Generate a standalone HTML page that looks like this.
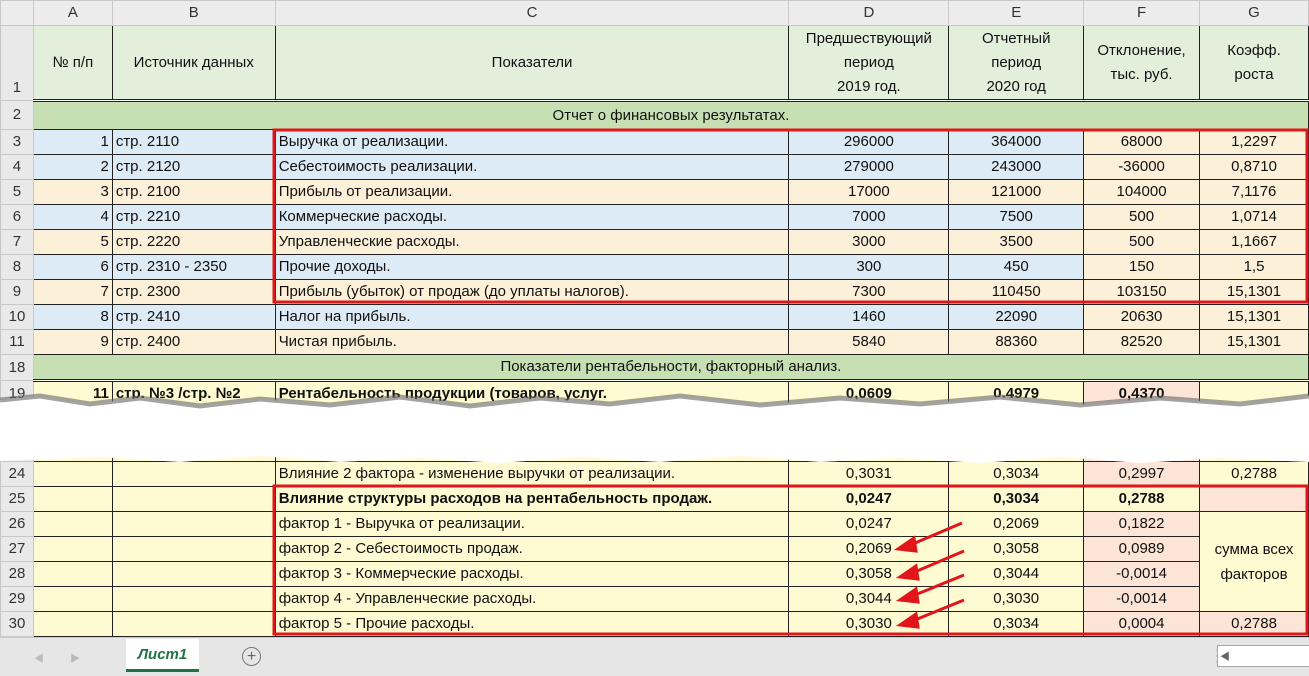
<!DOCTYPE html><html><head><meta charset="utf-8"><style>
body{margin:0;width:1309px;height:675px;overflow:hidden;background:#fff;font-family:"Liberation Sans","Noto Sans CJK SC",sans-serif;font-size:15px;color:#111;position:relative}
table{border-collapse:collapse;table-layout:fixed;position:absolute;left:0;top:0}
td{border:1px solid #222;padding:0 3px;white-space:nowrap;overflow:hidden;height:24px;line-height:24px}
td.rn{background:#e9e9e9;border:1px solid #c8c8c8;text-align:center;color:#333;padding:0}
tr.hd td{background:#ececec;border:1px solid #c8c8c8;text-align:center;height:24px;color:#333}
.c{text-align:center}.r{text-align:right}
.g1{background:#e2efda}.g2{background:#c6e0b4}.bl{background:#ddebf7}.or{background:#fdf0d8}.pk{background:#fce4d6}.yl{background:#fefad2}
.b{font-weight:bold}
</style></head><body>
<table>
<colgroup><col style="width:33px"><col style="width:79px"><col style="width:163px"><col style="width:514px"><col style="width:160px"><col style="width:135px"><col style="width:116px"><col style="width:109px"></colgroup>
<tr class="hd"><td></td><td>A</td><td>B</td><td>C</td><td>D</td><td>E</td><td>F</td><td>G</td></tr>
<tr style="height:75px"><td class="rn" style="vertical-align:bottom">1</td><td class="g1 c" style="line-height:20px">№ п/п</td><td class="g1 c">Источник данных</td><td class="g1 c">Показатели</td><td class="g1 c" style="line-height:24px;white-space:normal">Предшествующий период<br>2019 год.</td><td class="g1 c" style="line-height:24px">Отчетный<br>период<br>2020 год</td><td class="g1 c" style="line-height:24px">Отклонение,<br>тыс. руб.</td><td class="g1 c" style="line-height:24px">Коэфф.<br>роста</td></tr>
<tr style="height:29px"><td class="rn">2</td><td class="g2 c" colspan="7" style="border-top:3px double #222">Отчет о финансовых результатах.</td></tr>
<tr><td class="rn">3</td><td class="bl r">1</td><td class="bl">стр. 2110</td><td class="bl">Выручка от реализации.</td><td class="bl c">296000</td><td class="bl c">364000</td><td class="or c">68000</td><td class="or c">1,2297</td></tr>
<tr><td class="rn">4</td><td class="bl r">2</td><td class="bl">стр. 2120</td><td class="bl">Себестоимость реализации.</td><td class="bl c">279000</td><td class="bl c">243000</td><td class="or c">-36000</td><td class="or c">0,8710</td></tr>
<tr><td class="rn">5</td><td class="or r">3</td><td class="or">стр. 2100</td><td class="or">Прибыль от реализации.</td><td class="or c">17000</td><td class="or c">121000</td><td class="or c">104000</td><td class="or c">7,1176</td></tr>
<tr><td class="rn">6</td><td class="bl r">4</td><td class="bl">стр. 2210</td><td class="bl">Коммерческие расходы.</td><td class="bl c">7000</td><td class="bl c">7500</td><td class="or c">500</td><td class="or c">1,0714</td></tr>
<tr><td class="rn">7</td><td class="or r">5</td><td class="or">стр. 2220</td><td class="or">Управленческие расходы.</td><td class="or c">3000</td><td class="or c">3500</td><td class="or c">500</td><td class="or c">1,1667</td></tr>
<tr><td class="rn">8</td><td class="bl r">6</td><td class="bl">стр. 2310 - 2350</td><td class="bl">Прочие доходы.</td><td class="bl c">300</td><td class="bl c">450</td><td class="or c">150</td><td class="or c">1,5</td></tr>
<tr><td class="rn">9</td><td class="or r">7</td><td class="or">стр. 2300</td><td class="or">Прибыль (убыток) от продаж (до уплаты налогов).</td><td class="or c">7300</td><td class="or c">110450</td><td class="or c">103150</td><td class="or c">15,1301</td></tr>
<tr><td class="rn">10</td><td class="bl r">8</td><td class="bl">стр. 2410</td><td class="bl">Налог на прибыль.</td><td class="bl c">1460</td><td class="bl c">22090</td><td class="or c">20630</td><td class="or c">15,1301</td></tr>
<tr><td class="rn">11</td><td class="or r">9</td><td class="or">стр. 2400</td><td class="or">Чистая прибыль.</td><td class="or c">5840</td><td class="or c">88360</td><td class="or c">82520</td><td class="or c">15,1301</td></tr>
<tr><td class="rn">18</td><td class="g2 c" colspan="7" style="border-bottom:3px double #222">Показатели рентабельности, факторный анализ.</td></tr>
<tr><td class="rn">19</td><td class="yl r b">11</td><td class="yl b">стр. №3 /стр. №2</td><td class="yl b">Рентабельность продукции (товаров, услуг.</td><td class="yl c b">0,0609</td><td class="yl c b">0,4979</td><td class="pk c b">0,4370</td><td class="yl"></td></tr>
<tr style="height:55px"><td class="rn"></td><td class="yl"></td><td class="yl"></td><td class="yl"></td><td class="yl"></td><td class="yl"></td><td class="pk"></td><td class="yl"></td></tr>
<tr><td class="rn">24</td><td class="yl"></td><td class="yl"></td><td class="yl">Влияние 2 фактора - изменение выручки от реализации.</td><td class="yl c">0,3031</td><td class="yl c">0,3034</td><td class="pk c">0,2997</td><td class="yl c">0,2788</td></tr>
<tr><td class="rn">25</td><td class="yl"></td><td class="yl"></td><td class="yl b">Влияние структуры расходов на рентабельность продаж.</td><td class="yl c b">0,0247</td><td class="yl c b">0,3034</td><td class="yl c b">0,2788</td><td class="pk"></td></tr>
<tr><td class="rn">26</td><td class="yl"></td><td class="yl"></td><td class="yl">фактор 1 - Выручка от реализации.</td><td class="yl c">0,0247</td><td class="yl c">0,2069</td><td class="pk c">0,1822</td><td class="yl c" rowspan="4" style="line-height:25px">сумма всех<br>факторов</td></tr>
<tr><td class="rn">27</td><td class="yl"></td><td class="yl"></td><td class="yl">фактор 2 - Себестоимость продаж.</td><td class="yl c">0,2069</td><td class="yl c">0,3058</td><td class="pk c">0,0989</td></tr>
<tr><td class="rn">28</td><td class="yl"></td><td class="yl"></td><td class="yl">фактор 3 - Коммерческие расходы.</td><td class="yl c">0,3058</td><td class="yl c">0,3044</td><td class="pk c">-0,0014</td></tr>
<tr><td class="rn">29</td><td class="yl"></td><td class="yl"></td><td class="yl">фактор 4 - Управленческие расходы.</td><td class="yl c">0,3044</td><td class="yl c">0,3030</td><td class="pk c">-0,0014</td></tr>
<tr><td class="rn">30</td><td class="yl"></td><td class="yl"></td><td class="yl">фактор 5 - Прочие расходы.</td><td class="yl c">0,3030</td><td class="yl c">0,3034</td><td class="pk c">0,0004</td><td class="pk c">0,2788</td></tr>
</table>
<svg style="position:absolute;left:0;top:0" width="1309" height="675">
<path d="M0 400 L40 396 L90 404 L140 398 L200 406 L260 399 L330 405 L400 397 L470 406 L540 398 L610 404 L680 396 L760 405 L840 398 L920 404 L1000 397 L1080 405 L1160 398 L1240 404 L1309 396 L1309 462 L1220 458 L1140 463 L1060 457 L980 463 L900 458 L820 462 L740 456 L660 462 L580 457 L500 463 L420 458 L340 462 L260 456 L180 462 L100 457 L0 461 Z" fill="#fff"/>
<path d="M0 400 L40 396 L90 404 L140 398 L200 406 L260 399 L330 405 L400 397 L470 406 L540 398 L610 404 L680 396 L760 405 L840 398 L920 404 L1000 397 L1080 405 L1160 398 L1240 404 L1309 396" fill="none" stroke="#666" stroke-width="5" opacity=".6"/>
<rect x="274" y="130" width="1033" height="172" fill="none" stroke="#e0161b" stroke-width="3"/>
<rect x="274" y="486" width="1033" height="148" fill="none" stroke="#e0161b" stroke-width="3"/>
<g stroke="#e0161b" stroke-width="3" fill="#e0161b">
<line x1="962" y1="523" x2="908" y2="546"/><polygon points="898,549 914,538 916,551"/>
<line x1="964" y1="551" x2="910" y2="574"/><polygon points="900,577 916,566 918,579"/>
<line x1="964" y1="575" x2="910" y2="597"/><polygon points="900,600 916,589 918,602"/>
<line x1="964" y1="600" x2="910" y2="622"/><polygon points="900,625 916,614 918,627"/>
</g>
</svg>
<div style="position:absolute;left:0;top:637px;width:1309px;height:38px;background:#e6e6e6;border-top:1px solid #ccc"></div>
<div style="position:absolute;left:34px;top:650px;color:#bbb;font-size:10px">◀</div>
<div style="position:absolute;left:70px;top:650px;color:#bbb;font-size:10px">▶</div>
<div style="position:absolute;left:126px;top:639px;width:73px;height:30px;background:#fff;border-bottom:3px solid #217346;color:#217346;font-weight:bold;font-style:italic;text-align:center;line-height:32px;font-size:15px">Лист1</div>
<div style="position:absolute;left:242px;top:647px;width:17px;height:17px;border:1.5px solid #777;border-radius:50%;text-align:center;line-height:17px;color:#666;font-size:16px">+</div>
<div style="position:absolute;left:1215px;top:646px;color:#999;font-size:12px;line-height:6px">·<br>·<br>·</div>
<div style="position:absolute;left:1217px;top:645px;width:92px;height:20px;background:#fff;border:1px solid #aaa"></div>
<div style="position:absolute;left:1220px;top:648px;color:#666;font-size:10px">◀</div>
</body></html>
